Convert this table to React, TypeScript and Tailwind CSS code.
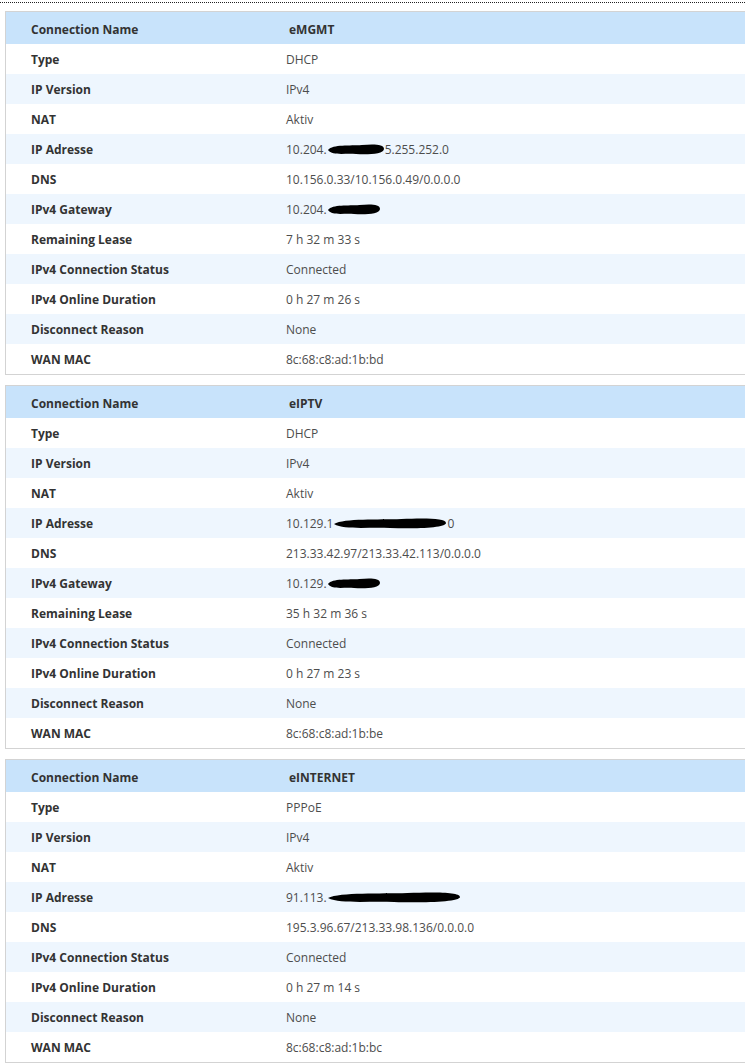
import React from "react";

type Row = { label: string; value: React.ReactNode };

function Blob({ w }: { w: number }) {
  return (
    <svg width={w} height="14" viewBox={`0 0 ${w} 14`} className="inline-block align-middle">
      <path
        d={`M1 7 C ${w * 0.1} 1, ${w * 0.4} 3, ${w * 0.6} 2 S ${w - 1} 1, ${w - 1} 6 C ${w - 1} 11, ${w * 0.7} 12, ${w * 0.5} 11 S ${w * 0.1} 13, 1 7 Z`}
        fill="#000"
      />
    </svg>
  );
}

function Redacted({ pre, w, post }: { pre: string; w: number; post?: string }) {
  return (
    <span className="inline-flex items-center">
      <span>{pre}</span>
      <Blob w={w} />
      {post && <span>{post}</span>}
    </span>
  );
}

const tables: { name: string; rows: Row[] }[] = [
  {
    name: "eMGMT",
    rows: [
      { label: "Type", value: "DHCP" },
      { label: "IP Version", value: "IPv4" },
      { label: "NAT", value: "Aktiv" },
      { label: "IP Adresse", value: <Redacted pre="10.204." w={58} post="5.255.252.0" /> },
      { label: "DNS", value: "10.156.0.33/10.156.0.49/0.0.0.0" },
      { label: "IPv4 Gateway", value: <Redacted pre="10.204." w={54} /> },
      { label: "Remaining Lease", value: "7 h 32 m 33 s" },
      { label: "IPv4 Connection Status", value: "Connected" },
      { label: "IPv4 Online Duration", value: "0 h 27 m 26 s" },
      { label: "Disconnect Reason", value: "None" },
      { label: "WAN MAC", value: "8c:68:c8:ad:1b:bd" },
    ],
  },
  {
    name: "eIPTV",
    rows: [
      { label: "Type", value: "DHCP" },
      { label: "IP Version", value: "IPv4" },
      { label: "NAT", value: "Aktiv" },
      { label: "IP Adresse", value: <Redacted pre="10.129.1" w={114} post="0" /> },
      { label: "DNS", value: "213.33.42.97/213.33.42.113/0.0.0.0" },
      { label: "IPv4 Gateway", value: <Redacted pre="10.129." w={54} /> },
      { label: "Remaining Lease", value: "35 h 32 m 36 s" },
      { label: "IPv4 Connection Status", value: "Connected" },
      { label: "IPv4 Online Duration", value: "0 h 27 m 23 s" },
      { label: "Disconnect Reason", value: "None" },
      { label: "WAN MAC", value: "8c:68:c8:ad:1b:be" },
    ],
  },
  {
    name: "eINTERNET",
    rows: [
      { label: "Type", value: "PPPoE" },
      { label: "IP Version", value: "IPv4" },
      { label: "NAT", value: "Aktiv" },
      { label: "IP Adresse", value: <Redacted pre="91.113." w={134} /> },
      { label: "DNS", value: "195.3.96.67/213.33.98.136/0.0.0.0" },
      { label: "IPv4 Connection Status", value: "Connected" },
      { label: "IPv4 Online Duration", value: "0 h 27 m 14 s" },
      { label: "Disconnect Reason", value: "None" },
      { label: "WAN MAC", value: "8c:68:c8:ad:1b:bc" },
    ],
  },
];

function InfoTable({ name, rows }: { name: string; rows: Row[] }) {
  return (
    <div className="border border-r-0 border-[#d3d3d3] bg-white">
      <div className="flex h-[32px] items-center bg-[#c8e3fb] pt-[3px]">
        <div className="w-[255px] pl-[25px] font-bold text-[#333]">Connection Name</div>
        <div className="pl-[28px] font-bold text-[#333]">{name}</div>
      </div>
      {rows.map((r, i) => (
        <div
          key={r.label}
          className={`flex h-[30px] items-center pt-[2px] ${i % 2 === 1 ? "bg-[#eef6fe]" : "bg-white"}`}
        >
          <div className="w-[255px] pl-[25px] font-bold text-[#333]">{r.label}</div>
          <div className="pl-[25px] text-[#4d4d4d]">{r.value}</div>
        </div>
      ))}
    </div>
  );
}

export default function App() {
  return (
    <div className="min-h-[1064px] overflow-hidden bg-white text-[12px] font-['Open_Sans',sans-serif]">
      <div className="mt-[2px] border-t border-dotted border-[#222]"></div>
      <div className="mt-[8px] flex flex-col gap-[10px] pl-[5px]">
        {tables.map((t) => (
          <InfoTable key={t.name} name={t.name} rows={t.rows} />
        ))}
      </div>
    </div>
  );
}
